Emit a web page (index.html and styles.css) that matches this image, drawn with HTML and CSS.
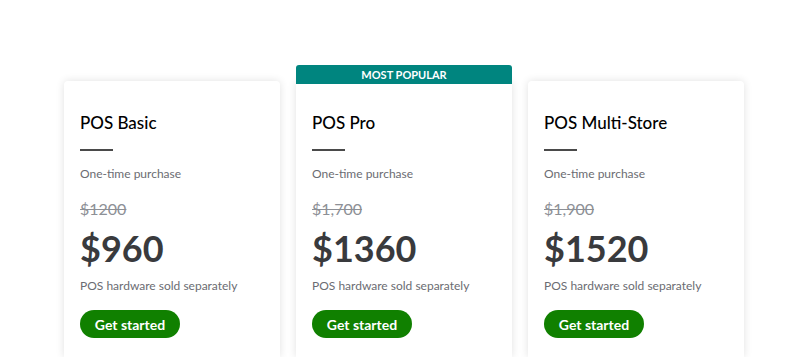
FILE: index.html
```html
<!DOCTYPE html>
<html lang="en">
<head>
    <meta charset="UTF-8">
    <meta name="viewport" content="width=device-width, initial-scale=1.0">
    <title>POS Pricing</title>
    <link rel="stylesheet" href="styles.css">
</head>
<body>
    <div class="plans">
        <div class="plan">
            <h2 class="plan-name">POS Basic</h2>
            <div class="divider"></div>
            <p class="plan-note">One-time purchase</p>
            <p class="old-price">$1200</p>
            <p class="price">$960</p>
            <p class="plan-note hardware">POS hardware sold separately</p>
            <button class="start">Get started</button>
        </div>
        <div class="plan popular">
            <div class="badge">MOST POPULAR</div>
            <h2 class="plan-name">POS Pro</h2>
            <div class="divider"></div>
            <p class="plan-note">One-time purchase</p>
            <p class="old-price">$1,700</p>
            <p class="price">$1360</p>
            <p class="plan-note hardware">POS hardware sold separately</p>
            <button class="start">Get started</button>
        </div>
        <div class="plan">
            <h2 class="plan-name">POS Multi-Store</h2>
            <div class="divider"></div>
            <p class="plan-note">One-time purchase</p>
            <p class="old-price">$1,900</p>
            <p class="price">$1520</p>
            <p class="plan-note hardware">POS hardware sold separately</p>
            <button class="start">Get started</button>
        </div>
    </div>
</body>
</html>
```

FILE: styles.css
```css
body {
    margin: 0;
    font-family: Lato, "Noto Sans", Arial, sans-serif;
    background: #fff;
    color: #393a3d;
    overflow: hidden;
}

.plans {
    display: flex;
    gap: 16px;
    padding: 81px 0 0 64px;
}

.plan {
    position: relative;
    width: 216px;
    height: 276px;
    box-sizing: border-box;
    padding: 30px 16px 0;
    background: #fff;
    border-radius: 4px 4px 0 0;
    box-shadow: 0 0 8px rgba(0, 0, 0, 0.12);
}

.badge {
    position: absolute;
    top: -16px;
    left: 0;
    right: 0;
    height: 19px;
    line-height: 19px;
    background: #00857f;
    color: #fff;
    font-size: 11px;
    font-weight: bold;
    text-align: center;
    border-radius: 3px 3px 0 0;
}

.plan-name {
    margin: 0;
    font-size: 17px;
    line-height: 24px;
    font-weight: 500;
    color: #000;
}

.divider {
    width: 33px;
    height: 2px;
    margin-top: 14px;
    background: #4a4a4a;
}

.plan-note {
    margin: 15px 0 0;
    font-size: 12px;
    line-height: 16px;
    color: #6b6c72;
}

.old-price {
    margin: 17px 0 0;
    font-size: 16px;
    line-height: 20px;
    color: #8d9096;
    text-decoration: line-through;
}

.price {
    margin: 9px 0 0;
    font-size: 36px;
    line-height: 40px;
    font-weight: bold;
    color: #393a3d;
}

.hardware {
    margin-top: 10px;
}

.start {
    margin-top: 16px;
    width: 100px;
    height: 28px;
    border: none;
    border-radius: 14px;
    background: #108000;
    color: #fff;
    font-family: inherit;
    font-size: 14px;
    font-weight: bold;
    cursor: pointer;
}

.start:hover {
    background: #0d6b00;
}
```
